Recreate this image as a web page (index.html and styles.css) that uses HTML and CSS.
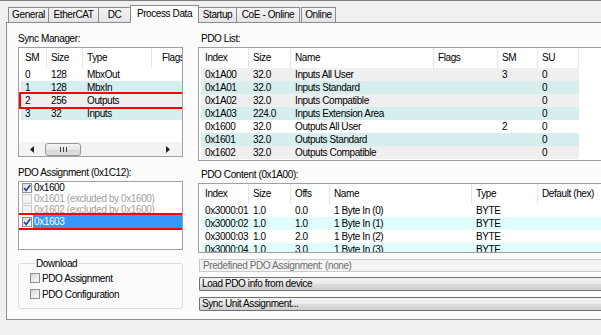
FILE: index.html
```html
<!DOCTYPE html>
<html lang="en">
<head>
    <meta charset="UTF-8">
    <title>Process Data</title>
    <link rel="stylesheet" href="styles.css">
</head>
<body>
    <div class="tabs">
        <span class="tab t-general">General</span>
        <span class="tab t-ethercat">EtherCAT</span>
        <span class="tab t-dc">DC</span>
        <span class="tab t-pd on">Process Data</span>
        <span class="tab t-startup">Startup</span>
        <span class="tab t-coe">CoE - Online</span>
        <span class="tab t-online">Online</span>
    </div>
    <div class="page">
        <div class="left">
            <div class="cap">Sync Manager:</div>
            <div class="list sync">
                <div class="head"><span>SM</span><span>Size</span><span>Type</span><span class="flags">Flags</span></div>
                <div class="rows">
                    <div class="row"><span>0</span><span>128</span><span>MbxOut</span><span></span></div>
                    <div class="row cyan"><span>1</span><span>128</span><span>MbxIn</span><span></span></div>
                    <div class="row grey mark"><span>2</span><span>256</span><span>Outputs</span><span></span></div>
                    <div class="row cyan"><span>3</span><span>32</span><span>Inputs</span><span></span></div>
                </div>
                <div class="hscroll">
                    <span class="arrow"><svg width="4" height="7" viewBox="0 0 4 7"><polygon points="4,0 0,3.5 4,7" fill="#222"/></svg></span>
                    <span class="thumb"><i class="grip"></i></span>
                    <span class="track"></span>
                    <span class="arrow"><svg width="4" height="7" viewBox="0 0 4 7"><polygon points="0,0 4,3.5 0,7" fill="#222"/></svg></span>
                </div>
            </div>

            <div class="cap gap">PDO Assignment (0x1C12):</div>
            <div class="list assign">
                <div class="item">
                    <span class="cb"><svg width="8" height="8" viewBox="0 0 8 8"><path d="M1 4 L3.2 6.5 L7.2 1" fill="none" stroke="#1d3f98" stroke-width="1.6"/></svg></span>
                    <span class="lbl">0x1600</span>
                </div>
                <div class="item off"><span class="cb"></span><span class="lbl">0x1601 (excluded by 0x1600)</span></div>
                <div class="item off"><span class="cb"></span><span class="lbl">0x1602 (excluded by 0x1600)</span></div>
                <div class="item sel mark">
                    <span class="cb"><svg width="8" height="8" viewBox="0 0 8 8"><path d="M1 4 L3.2 6.5 L7.2 1" fill="none" stroke="#1d3f98" stroke-width="1.6"/></svg></span>
                    <span class="lbl">0x1603</span>
                </div>
            </div>

            <fieldset class="download">
                <legend>Download</legend>
                <div class="opt"><span class="cb"></span>PDO Assignment</div>
                <div class="opt"><span class="cb"></span>PDO Configuration</div>
            </fieldset>
        </div>

        <div class="right">
            <div class="cap indent">PDO List:</div>
            <div class="list pdo">
                <div class="head"><span>Index</span><span>Size</span><span>Name</span><span>Flags</span><span>SM</span><span>SU</span><span></span></div>
                <div class="rows">
                    <div class="row grey"><span>0x1A00</span><span>32.0</span><span>Inputs All User</span><span></span><span>3</span><span>0</span></div>
                    <div class="row cyan"><span>0x1A01</span><span>32.0</span><span>Inputs Standard</span><span></span><span></span><span>0</span></div>
                    <div class="row grey"><span>0x1A02</span><span>32.0</span><span>Inputs Compatible</span><span></span><span></span><span>0</span></div>
                    <div class="row cyan"><span>0x1A03</span><span>224.0</span><span>Inputs Extension Area</span><span></span><span></span><span>0</span></div>
                    <div class="row"><span>0x1600</span><span>32.0</span><span>Outputs All User</span><span></span><span>2</span><span>0</span></div>
                    <div class="row cyan"><span>0x1601</span><span>32.0</span><span>Outputs Standard</span><span></span><span></span><span>0</span></div>
                    <div class="row grey"><span>0x1602</span><span>32.0</span><span>Outputs Compatible</span><span></span><span></span><span>0</span></div>
                </div>
            </div>

            <div class="cap indent gap2">PDO Content (0x1A00):</div>
            <div class="list content">
                <div class="head"><span>Index</span><span>Size</span><span>Offs</span><span>Name</span><span>Type</span><span>Default (hex)</span></div>
                <div class="rows">
                    <div class="row"><span>0x3000:01</span><span>1.0</span><span>0.0</span><span>1 Byte In (0)</span><span>BYTE</span><span></span></div>
                    <div class="row aqua"><span>0x3000:02</span><span>1.0</span><span>1.0</span><span>1 Byte In (1)</span><span>BYTE</span><span></span></div>
                    <div class="row"><span>0x3000:03</span><span>1.0</span><span>2.0</span><span>1 Byte In (2)</span><span>BYTE</span><span></span></div>
                    <div class="row aqua"><span>0x3000:04</span><span>1.0</span><span>3.0</span><span>1 Byte In (3)</span><span>BYTE</span><span></span></div>
                </div>
            </div>

            <div class="field">Predefined PDO Assignment: (none)</div>
            <div class="btn">Load PDO info from device</div>
            <div class="btn second">Sync Unit Assignment...</div>
        </div>
    </div>
</body>
</html>
```

FILE: styles.css
```css
* {
    box-sizing: border-box;
}
body {
    margin: 0;
    width: 601px;
    height: 335px;
    overflow: hidden;
    background: #f0f0f0;
    border-top: 1px solid #7d7d7d;
    font: 10px/13px "Liberation Sans", Arial, sans-serif;
    letter-spacing: -0.4px;
    color: #000;
}

/* tab strip */
.tabs {
    display: flex;
    align-items: flex-end;
    height: 21px;
    padding-left: 8px;
}
.tab {
    height: 15px;
    line-height: 14px;
    text-align: center;
    border: 1px solid #898c95;
    border-bottom: 0;
    margin-right: -1px;
    background: linear-gradient(#f4f4f4, #e4e4e4);
    white-space: nowrap;
}
.tab.on {
    height: 18px;
    line-height: 16px;
    margin-bottom: -1px;
    background: #fbfbfb;
    position: relative;
    z-index: 1;
}
.t-general { width: 41px; }
.t-ethercat { width: 51px; }
.t-dc { width: 33px; }
.t-pd { width: 69px; }
.t-startup { width: 39px; }
.t-coe { width: 64px; }
.t-online { width: 35px; margin-left: 2px; }

/* page */
.page {
    display: flex;
    width: 595px;
    height: 298px;
    margin-left: 6px;
    padding: 9px 0 0 11px;
    border: 1px solid #898c95;
    border-right: 0;
    background: #fbfbfb;
}
.left {
    width: 165px;
    margin-right: 15px;
}
.right {
    width: 403px;
}
.cap {
    height: 13px;
    margin-bottom: 2px;
    white-space: nowrap;
}
.cap.gap { margin-top: 9px; }
.cap.gap2 { margin-top: 7px; }
.cap.indent { padding-left: 3px; }

/* list views */
.list {
    background: #fff;
    border: 1px solid #a0a0a0;
    overflow: hidden;
}
.right .list {
    border-right: 0;
}
.head {
    display: flex;
    height: 20px;
    line-height: 19px;
    padding-left: 2px;
    white-space: nowrap;
}
.head span {
    flex: none;
    padding-left: 4px;
    border-right: 1px solid #e3e5e8;
}
.rows {
    padding-left: 2px;
}
.row {
    display: flex;
    height: 13px;
    line-height: 13px;
    white-space: nowrap;
}
.row span {
    flex: none;
    padding-left: 4px;
    overflow: hidden;
}
.row.cyan { background: #d6eeee; }
.row.grey { background: #efefef; }
.row.aqua { background: #e0fcfc; }
.mark {
    outline: 2px solid #f00;
}

.sync {
    display: flex;
    flex-direction: column;
    height: 110px;
}
.sync .rows { flex: 1; }
.sync span:nth-child(1) { width: 26px; }
.sync span:nth-child(2) { width: 36px; }
.sync span:nth-child(3) { width: 69px; }
.sync span:nth-child(4) { width: 29px; }
.sync .head .flags { padding-left: 10px; width: 40px; }

.hscroll {
    display: flex;
    align-items: center;
    height: 14px;
    background: #f3f3f3;
}
.arrow {
    width: 16px;
    height: 14px;
    display: flex;
    align-items: center;
    justify-content: center;
}
.thumb {
    width: 122px;
    height: 13px;
    border: 1px solid #979797;
    border-radius: 3px;
    background: linear-gradient(#f6f6f6, #e6e6e6 50%, #d8d8d8 51%, #dedede);
    display: flex;
    align-items: center;
    justify-content: center;
}
.grip {
    width: 7px;
    height: 5px;
    background: repeating-linear-gradient(90deg, #444 0 1px, transparent 1px 3px);
}
.track { flex: 1; }

.pdo {
    height: 114px;
}
.pdo .head span:nth-child(1), .pdo .row span:nth-child(1) { width: 48px; }
.pdo .head span:nth-child(2), .pdo .row span:nth-child(2) { width: 42px; }
.pdo .head span:nth-child(3), .pdo .row span:nth-child(3) { width: 143px; }
.pdo .head span:nth-child(4), .pdo .row span:nth-child(4) { width: 64px; }
.pdo .head span:nth-child(5), .pdo .row span:nth-child(5) { width: 40px; }
.pdo .head span:nth-child(6), .pdo .row span:nth-child(6) { width: 41px; }
.pdo .head span:nth-child(7) { width: 60px; }
.pdo .row { width: 378px; }

.content {
    height: 70px;
}
.content span:nth-child(1) { width: 48px; }
.content span:nth-child(2) { width: 42px; }
.content span:nth-child(3) { width: 39px; }
.content span:nth-child(4) { width: 142px; }
.content span:nth-child(5) { width: 66px; }
.content span:nth-child(6) { width: 100px; }

/* check list */
.assign {
    height: 69px;
}
.item {
    display: flex;
    align-items: center;
    height: 11px;
    padding-left: 3px;
    white-space: nowrap;
}
.item.sel {
    height: 13px;
    margin-left: -1px;
    padding-left: 4px;
}
.lbl {
    flex: 1;
    padding-left: 1px;
    margin-left: 1px;
    line-height: 13px;
}
.item.off .lbl { color: #a0a0a0; }
.item.sel .lbl {
    background: #3399ff;
    color: #fff;
}
.cb {
    flex: none;
    width: 10px;
    height: 10px;
    border: 1px solid #8e8f8f;
    background: linear-gradient(135deg, #d9d9d9, #fbfbfb);
    display: flex;
    align-items: center;
    justify-content: center;
}
.item.off .cb {
    border-color: #c9c9c9;
    background: #f3f3f3;
}

/* download group */
.download {
    height: 52px;
    margin: 7px 0 0;
    padding: 0 0 0 11px;
    border: 1px solid #d5dfe5;
    border-radius: 3px;
    min-width: 0;
}
.download legend {
    margin-left: 5px;
    padding: 0 1px;
    line-height: 13px;
}
.opt {
    display: flex;
    align-items: center;
    height: 12px;
    margin-top: 2px;
}
.opt + .opt { margin-top: 4px; }
.opt .cb { margin-right: 2px; }

/* bottom controls */
.field {
    height: 13px;
    line-height: 11px;
    margin: 6px 0 0 1px;
    padding-left: 3px;
    border: 1px solid #cacaca;
    border-right: 0;
    background: #f4f4f4;
    color: #6d6d6d;
}
.btn {
    height: 14px;
    line-height: 12px;
    margin: 5px 0 0 1px;
    padding-left: 2px;
    border: 1px solid #707070;
    border-right: 0;
    border-radius: 2px 0 0 2px;
    background: linear-gradient(#f2f2f2, #ebebeb 50%, #dddddd 51%, #cfcfcf);
}
.btn.second { margin-top: 6px; }
```
